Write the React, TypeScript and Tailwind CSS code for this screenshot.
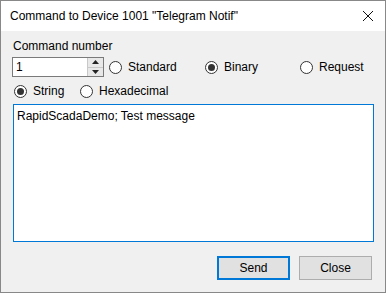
import React from 'react';

const Radio = ({ label, checked, className = '' }: { label: string; checked?: boolean; className?: string }) => (
  <label className={`flex items-center ${className}`}>
    <span className="w-[13px] h-[13px] rounded-full border border-[#333] bg-white flex items-center justify-center shrink-0">
      {checked && <span className="w-[7px] h-[7px] rounded-full bg-[#333]" />}
    </span>
    <span className="ml-[6px]">{label}</span>
  </label>
);

const App = () => {
  return (
    <div
      className="w-[386px] h-[293px] border border-[#888] bg-[#f0f0f0] flex flex-col text-[12px] text-black"
      style={{ fontFamily: '"Liberation Sans", Arial, sans-serif' }}
    >
      <div className="h-[30px] bg-white flex items-center justify-between pl-[9px] pr-[9px] shrink-0">
        <span className="text-[12px]">Command to Device 1001 "Telegram Notif"</span>
        <svg width="12" height="12" viewBox="0 0 12 12" className="mr-[2px]">
          <path d="M1 1 L11 11 M11 1 L1 11" stroke="#111" strokeWidth="1" />
        </svg>
      </div>

      <div className="flex-1 flex flex-col px-[11px]">
        <div className="mt-[8px] ml-[1px] leading-[15px]">Command number</div>

        <div className="flex items-center mt-[3px] h-[20px]">
          <div className="flex h-[20px] w-[92px] border border-[#7a7a7a] bg-white">
            <div className="flex-1 pl-[3px] leading-[18px]">1</div>
            <div className="w-[16px] flex flex-col border-l border-[#c8c8c8] bg-[#e8e8e8]">
              <div className="flex-1 flex items-center justify-center border-b border-[#c8c8c8]">
                <svg width="7" height="4" viewBox="0 0 7 4"><path d="M0 4 L3.5 0 L7 4 Z" fill="#222" /></svg>
              </div>
              <div className="flex-1 flex items-center justify-center">
                <svg width="7" height="4" viewBox="0 0 7 4"><path d="M0 0 L3.5 4 L7 0 Z" fill="#222" /></svg>
              </div>
            </div>
          </div>
          <Radio label="Standard" className="ml-[5px] w-[96px]" />
          <Radio label="Binary" checked className="w-[95px]" />
          <Radio label="Request" />
        </div>

        <div className="flex items-center mt-[7px] h-[14px]">
          <Radio label="String" checked className="ml-[2px] w-[66px]" />
          <Radio label="Hexadecimal" />
        </div>

        <div className="mt-[6px] ml-[1px] h-[138px] w-[361px] border border-[#0078d7] bg-white px-[3px] pt-[3px] leading-[16px]">
          RapidScadaDemo; Test message
        </div>

        <div className="flex justify-end gap-[9px] mt-[14px] pr-[2px]">
          <button className="w-[73px] h-[24px] border-2 border-[#0078d7] bg-[#e1e1e1] text-[12px]">Send</button>
          <button className="w-[73px] h-[24px] border border-[#adadad] bg-[#e1e1e1] text-[12px]">Close</button>
        </div>
      </div>
    </div>
  );
};

export default App;
